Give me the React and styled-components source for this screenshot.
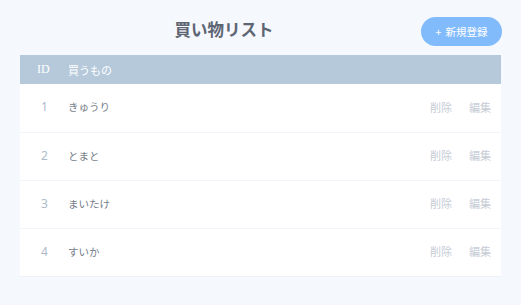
import React from "react";
import styled, { createGlobalStyle } from "styled-components";

const Global = createGlobalStyle`
  html, body { margin: 0; padding: 0; background: #f5f8fd; }
  body { font-family: "Noto Sans CJK JP", "Noto Sans", sans-serif; }
`;

const Page = styled.div`
  padding: 17px 20px 0 20px;
  min-height: 305px;
  box-sizing: border-box;
`;

const TopBar = styled.div`
  display: flex;
  align-items: center;
  height: 29px;
  margin-bottom: 9px;
`;

const Title = styled.h1`
  flex: 1;
  margin: 0 0 4px 0;
  padding-left: 7px;
  text-align: center;
  font-size: 16.5px;
  font-weight: 700;
  color: #5d6573;
  line-height: 25px;
`;

const AddButton = styled.button`
  width: 81px;
  height: 29px;
  margin-right: -1px;
  border: none;
  border-radius: 15px;
  background: #82bbfc;
  color: #fff;
  font-family: inherit;
  font-size: 10.5px;
  padding: 0;
  display: flex;
  align-items: center;
  justify-content: center;
  gap: 4px;
`;

const Table = styled.div`
  background: #fff;
  border-bottom: 1px solid #eef2f8;
`;

const HeadRow = styled.div`
  display: grid;
  grid-template-columns: 48px 1fr;
  height: 29px;
  align-items: center;
  background: #b5c9db;
  color: #fff;
  font-size: 11px;
`;

const HeadId = styled.div`
  padding-left: 17px;
  font-family: "Liberation Serif", serif;
  font-size: 12px;
`;

const Row = styled.div`
  display: grid;
  grid-template-columns: 48px 1fr auto;
  height: 48px;
  align-items: center;
  border-top: ${(p) => (p.$first ? "none" : "1px solid #f1f4f9")};
  box-sizing: border-box;
  font-size: 11px;
  padding-bottom: 3px;
`;

const IdCell = styled.div`
  padding-left: 21px;
  color: #aebbcb;
  font-family: "Noto Sans", sans-serif;
  font-size: 12px;
`;

const NameCell = styled.div`
  color: #767d89;
  font-size: 10.5px;
`;

const Actions = styled.div`
  display: flex;
  gap: 17px;
  padding-right: 10px;
`;

const Action = styled.span`
  color: #c6ccd6;
  font-size: 11px;
`;

const items = [
  { id: 1, name: "きゅうり" },
  { id: 2, name: "とまと" },
  { id: 3, name: "まいたけ" },
  { id: 4, name: "すいか" },
];

export default function App() {
  return (
    <>
      <Global />
      <Page>
        <TopBar>
          <Title>買い物リスト</Title>
          <AddButton>
            <span>+</span>
            <span>新規登録</span>
          </AddButton>
        </TopBar>
        <Table>
          <HeadRow>
            <HeadId>ID</HeadId>
            <div>買うもの</div>
          </HeadRow>
          {items.map((it, i) => (
            <Row key={it.id} $first={i === 0}>
              <IdCell>{it.id}</IdCell>
              <NameCell>{it.name}</NameCell>
              <Actions>
                <Action>削除</Action>
                <Action>編集</Action>
              </Actions>
            </Row>
          ))}
        </Table>
      </Page>
    </>
  );
}
